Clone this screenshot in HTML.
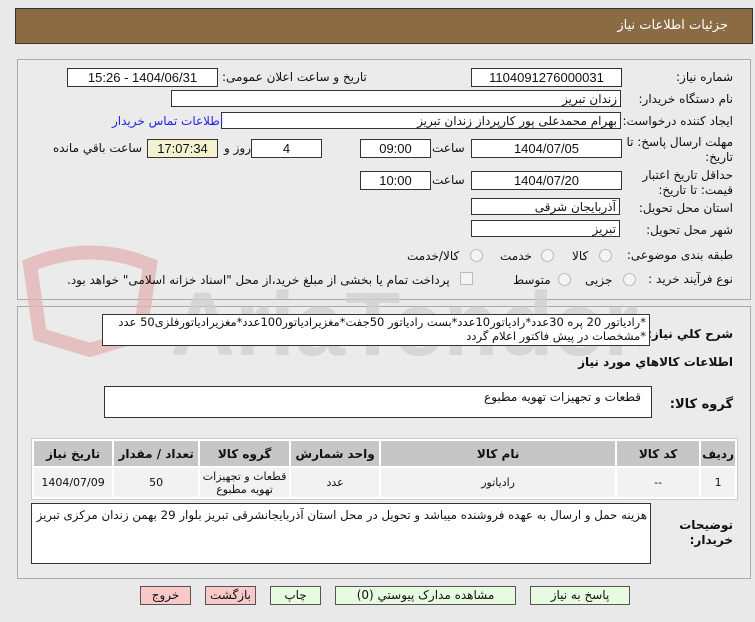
<!DOCTYPE html>
<html><head><meta charset="utf-8"><style>
body{margin:0;width:755px;height:622px;background:#e9e9e9;font-family:"DejaVu Sans","Liberation Sans",sans-serif;font-size:12px;color:#111;position:relative;overflow:hidden}
.a{position:absolute}
.hdr{left:15px;top:8px;width:736px;height:34px;background:#8b6b43;border:1px solid #333}
.hdr span{position:absolute;right:24px;top:9px;color:#fff;font-size:13px}
.pn{border:1px solid #aaa;background:#ebebeb}
.box{position:absolute;background:#fff;border:1px solid #333;height:17px;line-height:17px;direction:rtl;text-align:center;font-size:13px;font-family:"Liberation Sans","DejaVu Sans",sans-serif}
.rt{text-align:right;padding-right:3px;box-sizing:border-box;font-family:"DejaVu Sans",sans-serif;font-size:12px}
.l{position:absolute;direction:rtl;white-space:nowrap}
.rad{position:absolute;width:11px;height:11px;border-radius:50%;border:1px solid #bbb;background:#f4f4f4}
table{border-collapse:separate;border-spacing:2px;position:absolute;left:31px;top:438px;width:707px;background:#fff;border:1px solid #ccc;direction:rtl}
th{background:#c6c6c6;height:23px;font-weight:bold;font-size:12px}
td{background:#f2f2f2;height:27px;text-align:center;font-size:11px}
.btn{position:absolute;top:586px;height:17px;border:1px solid #555;text-align:center;line-height:17px;font-size:12px;background:#e6fbe0;direction:rtl}
.red{background:#f9c9c9}
</style></head><body>
<div class="a hdr"><span>جزئیات اطلاعات نیاز</span></div>
<div class="a pn" style="left:17px;top:59px;width:732px;height:239px"></div>
<div class="a pn" style="left:17px;top:306px;width:732px;height:271px"></div>
<svg class="a" style="left:20px;top:245px;opacity:0.75" width="620" height="120"><path d="M10 20 Q70 -5 130 20 L120 90 L70 105 L20 90Z" fill="none" stroke="#e2b2b2" stroke-width="14"/><text x="150" y="110" font-size="90" fill="#cfcfcf" font-family="Liberation Sans" font-weight="bold">AriaTender.net</text></svg>

<div class="l" style="right:22px;top:70px">شماره نیاز:</div>
<div class="box" style="left:471px;top:68px;width:149px">1104091276000031</div>
<div class="l" style="left:222px;top:70px">تاریخ و ساعت اعلان عمومی:</div>
<div class="box" style="left:67px;top:68px;width:149px">1404/06/31 - 15:26</div>

<div class="l" style="right:22px;top:92px">نام دستگاه خریدار:</div>
<div class="box rt" style="left:171px;top:90px;width:450px">زندان تبریز</div>

<div class="l" style="right:22px;top:114px">ایجاد کننده درخواست:</div>
<div class="box rt" style="left:221px;top:112px;width:400px">بهرام محمدعلی پور کارپرداز زندان تبریز</div>
<div class="l" style="left:112px;top:114px;color:#2323e0">اطلاعات تماس خریدار</div>

<div class="l" style="right:22px;top:135px;line-height:15px;text-align:right">مهلت ارسال پاسخ: تا<br>تاریخ:</div>
<div class="box" style="left:471px;top:139px;width:149px">1404/07/05</div>
<div class="l" style="left:432px;top:141px">ساعت</div>
<div class="box" style="left:360px;top:139px;width:69px">09:00</div>
<div class="box" style="left:251px;top:139px;width:69px">4</div>
<div class="l" style="left:224px;top:141px">روز و</div>
<div class="box" style="left:147px;top:139px;width:69px;background:#f4f1cf">17:07:34</div>
<div class="l" style="left:53px;top:141px">ساعت باقي مانده</div>

<div class="l" style="right:22px;top:168px;line-height:15px;text-align:right">حداقل تاریخ اعتبار<br>قیمت: تا تاریخ:</div>
<div class="box" style="left:471px;top:171px;width:149px">1404/07/20</div>
<div class="l" style="left:432px;top:173px">ساعت</div>
<div class="box" style="left:360px;top:171px;width:69px">10:00</div>

<div class="l" style="right:22px;top:201px">استان محل تحویل:</div>
<div class="box rt" style="left:471px;top:198px;width:149px">آذربایجان شرقی</div>
<div class="l" style="right:22px;top:223px">شهر محل تحویل:</div>
<div class="box rt" style="left:471px;top:220px;width:149px">تبریز</div>

<div class="l" style="right:22px;top:248px">طبقه بندی موضوعی:</div>
<div class="rad" style="left:599px;top:249px"></div><div class="l" style="left:572px;top:249px">کالا</div>
<div class="rad" style="left:541px;top:249px"></div><div class="l" style="left:500px;top:249px">خدمت</div>
<div class="rad" style="left:470px;top:249px"></div><div class="l" style="left:407px;top:249px">کالا/خدمت</div>

<div class="l" style="right:22px;top:272px">نوع فرآیند خرید :</div>
<div class="rad" style="left:623px;top:273px"></div><div class="l" style="left:585px;top:273px">جزیی</div>
<div class="rad" style="left:558px;top:273px"></div><div class="l" style="left:513px;top:273px">متوسط</div>
<div class="a" style="left:460px;top:272px;width:11px;height:11px;border:1px solid #bbb;background:#f4f4f4"></div>
<div class="l" style="left:67px;top:273px">پرداخت تمام یا بخشی از مبلغ خرید،از محل "اسناد خزانه اسلامی" خواهد بود.</div>

<div class="l" style="right:22px;top:327px;font-weight:bold">شرح کلي نیاز:</div>
<div class="a" style="left:102px;top:314px;width:548px;height:32px;background:#fff;border:1px solid #333;direction:rtl;text-align:right;padding:0 3px;box-sizing:border-box;line-height:14px;font-size:11.5px;letter-spacing:-0.3px;white-space:nowrap;overflow:hidden">*رادیاتور 20 پره 30عدد*رادیاتور10عدد*بست رادیاتور 50جفت*مغزیرادیاتور100عدد*مغزیرادیاتورفلزی50 عدد<br>*مشخصات در پیش فاکتور اعلام گردد</div>
<div class="l" style="right:22px;top:355px;font-weight:bold">اطلاعات كالاهاي مورد نیاز</div>
<div class="l" style="right:22px;top:397px;font-weight:bold;font-size:13px">گروه کالا:</div>
<div class="a" style="left:104px;top:386px;width:548px;height:32px;background:#fff;border:1px solid #333;direction:rtl;text-align:right;padding:3px 10px;box-sizing:border-box">قطعات و تجهیزات تهویه مطبوع</div>

<table>
<tr><th style="width:27px">ردیف</th><th style="width:80px">کد کالا</th><th style="width:232px">نام کالا</th><th style="width:86px">واحد شمارش</th><th style="width:87px">گروه کالا</th><th style="width:82px">تعداد / مقدار</th><th>تاریخ نیاز</th></tr>
<tr><td>1</td><td>--</td><td>رادیاتور</td><td>عدد</td><td style="line-height:13px">قطعات و تجهیزات تهویه مطبوع</td><td>50</td><td>1404/07/09</td></tr>
</table>

<div class="l" style="right:22px;top:518px;font-weight:bold;line-height:15px;text-align:right">توضیحات<br>خریدار:</div>
<div class="a" style="left:31px;top:503px;width:620px;height:61px;background:#fff;border:1px solid #333;direction:rtl;text-align:right;padding:4px 3px;box-sizing:border-box;font-size:11.8px;white-space:nowrap;overflow:hidden;letter-spacing:-0.4px">هزینه حمل و ارسال به عهده فروشنده میباشد و تحویل در محل استان آذربایجانشرقی تبریز بلوار 29 بهمن زندان مرکزی تبریز</div>

<div class="btn red" style="left:140px;width:49px">خروج</div>
<div class="btn red" style="left:205px;width:49px">بازگشت</div>
<div class="btn" style="left:270px;width:49px">چاپ</div>
<div class="btn" style="left:335px;width:179px">مشاهده مدارک پیوستي (0)</div>
<div class="btn" style="left:530px;width:98px">پاسخ به نیاز</div>
</body></html>
